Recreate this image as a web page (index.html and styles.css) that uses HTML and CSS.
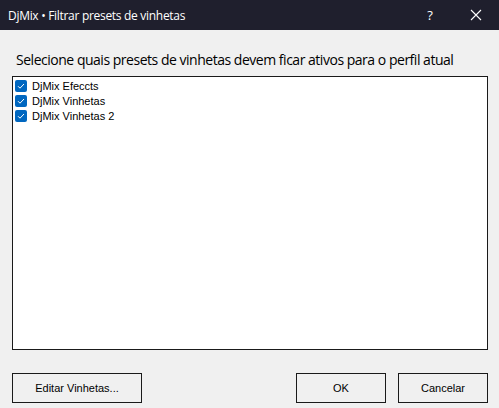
FILE: index.html
```html
<!DOCTYPE html>
<html>
<head>
<meta charset="utf-8">
<link rel="stylesheet" href="styles.css">
</head>
<body>
<div class="window">
  <div class="titlebar">
    <span class="title">DjMix • Filtrar presets de vinhetas</span>
    <div class="tb-buttons">
      <span class="tb-help">?</span>
      <span class="tb-close">
        <svg width="12" height="12" viewBox="0 0 12 12"><path d="M1 1 L11 11 M11 1 L1 11" stroke="#fff" stroke-width="1.1" fill="none"/></svg>
      </span>
    </div>
  </div>
  <div class="content">
    <div class="label">Selecione quais presets de vinhetas devem ficar ativos para o perfil atual</div>
    <div class="listbox">
      <div class="item"><span class="check"><svg width="12" height="12" viewBox="0 0 12 12"><path d="M3 6.2 L5 8.2 L9 4" stroke="#fff" stroke-width="1" fill="none"/></svg></span><span class="item-text">DjMix Efeccts</span></div>
      <div class="item"><span class="check"><svg width="12" height="12" viewBox="0 0 12 12"><path d="M3 6.2 L5 8.2 L9 4" stroke="#fff" stroke-width="1" fill="none"/></svg></span><span class="item-text">DjMix Vinhetas</span></div>
      <div class="item"><span class="check"><svg width="12" height="12" viewBox="0 0 12 12"><path d="M3 6.2 L5 8.2 L9 4" stroke="#fff" stroke-width="1" fill="none"/></svg></span><span class="item-text">DjMix Vinhetas 2</span></div>
    </div>
    <div class="buttons">
      <button class="btn btn-edit">Editar Vinhetas...</button>
      <div class="spacer"></div>
      <button class="btn">OK</button>
      <button class="btn">Cancelar</button>
    </div>
  </div>
</div>
</body>
</html>
```
FILE: styles.css
```css
html, body {
  margin: 0;
  padding: 0;
  width: 499px;
  height: 408px;
  overflow: hidden;
  background: #f0f0f0;
}
.window {
  width: 499px;
  height: 408px;
  display: flex;
  flex-direction: column;
}
.titlebar {
  height: 30px;
  background: #1f1f2d;
  display: flex;
  align-items: center;
  color: #fff;
  font-family: "Open Sans", "Noto Sans", sans-serif;
  font-size: 12px;
  flex: none;
}
.title {
  padding-left: 8px;
  flex: 1;
  letter-spacing: -0.3px;
}
.tb-buttons {
  display: flex;
  align-items: center;
}
.tb-help {
  width: 46px;
  text-align: center;
  font-size: 13px;
  margin-right: 0;
}
.tb-close {
  width: 46px;
  display: flex;
  justify-content: center;
  align-items: center;
  margin-right: 0;
}
.content {
  flex: 1;
  display: flex;
  flex-direction: column;
  padding: 0 11px 7px 12px;
}
.label {
  font-family: "Open Sans", "Noto Sans", sans-serif;
  font-size: 14px;
  letter-spacing: -0.48px;
  color: #000;
  padding-left: 4px;
  margin-top: 19px;
  height: 27px;
  line-height: 21px;
}
.listbox {
  height: 270px;
  background: #fff;
  border: 1px solid #1a1a1a;
  padding: 1px 1px;
  font-family: "Liberation Sans", Arial, sans-serif;
  font-size: 11px;
}
.item {
  height: 15px;
  display: flex;
  align-items: center;
}
.check {
  width: 12px;
  height: 12px;
  background: #0067c0;
  border-radius: 2px;
  display: flex;
  margin-left: 1px;
}
.item-text {
  margin-left: 5px;
  color: #000;
}
.buttons {
  display: flex;
  margin-top: 23px;
  gap: 12px;
}
.spacer {
  flex: 1;
}
.btn {
  height: 30px;
  width: 90px;
  background: #f0f0f0;
  border: 1px solid #1a1a1a;
  font-family: "Liberation Sans", Arial, sans-serif;
  font-size: 11px;
  color: #000;
  padding: 0;
  margin: 0;
}
.btn-edit {
  width: 130px;
}
```
